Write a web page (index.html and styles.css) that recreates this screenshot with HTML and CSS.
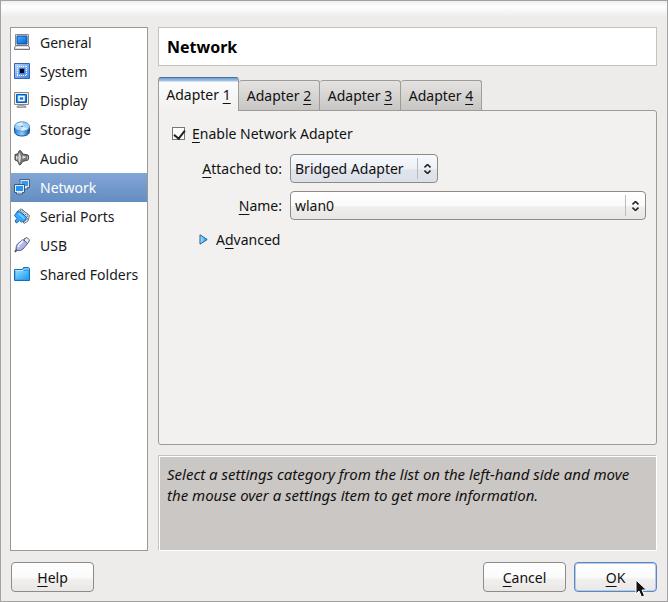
FILE: index.html
```html
<!DOCTYPE html>
<html lang="en">
<head>
<meta charset="utf-8">
<meta name="viewport" content="width=device-width, initial-scale=1">
<title>Settings - Network</title>
<link rel="stylesheet" href="styles.css">
</head>
<body>
<div class="window">
  <div class="titlebar"></div>
  <div class="content">
    <nav class="categories" aria-label="Settings categories">
      <a class="category" href="#general">
        <svg class="icon" viewBox="0 0 16 16"><path d="M1.500.5h13v11h-13z" fill="#eee" stroke="#888"/><path d="M3 2h10v8H3z" fill="url(#blue)" stroke="#0a4fae"/><path d="M2 11.500h12l1.500 2v2H.5v-2z" fill="#ddd" stroke="#777"/><path d="M2 13.500h12" stroke="#fff"/></svg>
        General</a>
      <a class="category" href="#system">
        <svg class="icon" viewBox="0 0 16 16"><path d="M.5.5h15v15H.5z" fill="url(#pale)" stroke="#3565b5"/><path d="M5 3.500h7M5 12.500h7M3.500 5v7M12.500 5v7" stroke="#fff" stroke-dasharray="1 1"/><path d="M3 3h1v1H3zM12 3h1v1h-1zM3 12h1v1H3z" fill="#fff"/><path d="M5 5h6v6H5z" fill="#2d82e0"/><path d="M6 6h4v4H6z" fill="#000"/></svg>
        System</a>
      <a class="category" href="#display">
        <svg class="icon" viewBox="0 0 16 16"><path d="M.5.5h14v12H.5z" fill="#f2f2ea" stroke="#888"/><path d="M2.500 2.500h10v8h-10z" fill="url(#blue)" stroke="#0b59bd"/><path d="M5 4.500h5v4H5z" fill="#1678dc" stroke="#fff" stroke-width="1.500"/><path d="M5 13h5v1h2v1.500H3V14h2z" fill="#bbb" stroke="#888" stroke-width=".7"/></svg>
        Display</a>
      <a class="category" href="#storage">
        <svg class="icon" viewBox="0 0 16 16"><path d="M.5 5.500v5c0 2.800 3.300 4.500 7.500 4.500s7.500-1.700 7.500-4.500v-5z" fill="url(#disk)" stroke="#1c5097"/><ellipse cx="8" cy="5.500" rx="7.500" ry="4.700" fill="#9bd1fc" stroke="#6090c5"/><path d="M8 5.500L2 3.500Q5 1.200 9 1.500zM8 5.500l6 2Q11 10 7 9.700z" fill="#d4efff"/><ellipse cx="8" cy="5.300" rx="1.800" ry="1.100" fill="#247fc6" stroke="#fff" stroke-width=".7"/></svg>
        Storage</a>
      <a class="category" href="#audio">
        <svg class="icon" viewBox="0 0 16 16"><path d="M1 4.500l2.500-.5L5.500.5c1.500 0 2.500 1.500 3 3.500l5.500 1q1.500 2 0 5l-5.500 1.500q-1 3-3 3.500L3.500 11 1 10z" fill="#777" stroke="#484848"/><path d="M2 6h1.500v3.500H2z" fill="#ddd"/><path d="M5 2.500c2.500 2 2.500 8 0 11Q3.500 8 5 2.500z" fill="#d8d8d8"/><path d="M8.500 5.500l4 1.500-4 2z" fill="#ddd"/><path d="M13.500 6v3.500" stroke="#aaa"/></svg>
        Audio</a>
      <a class="category selected" href="#network" aria-current="page">
        <svg class="icon" viewBox="0 0 16 16"><path d="M6 .5h9.500v8h-2v1.500H9V8.500H6z" fill="#dce4ec" stroke="#4a6078"/><path d="M7.500 2H14v5H7.500z" fill="#2e9aff"/><path d="M.5 5.500h10v8h-2V15h-6v-1.500h-2z" fill="#e9eef3" stroke="#345a82"/><path d="M2 7h7v5H2z" fill="#2492fb"/><path d="M3.500 14h4" stroke="#aaa"/></svg>
        Network</a>
      <a class="category" href="#serial">
        <svg class="icon" viewBox="0 0 16 16"><path d="M3 3.500L7 .8l8.500 6.700L14 13l-4 2.500z" fill="#eee" stroke="#777"/><path d="M6 2l8 6.500-1.500 4.500M8 1.500l7 6" fill="none" stroke="#4d718d" stroke-dasharray="2 1"/><path d="M3.500 3.500l3 .5 6 5-1.500 4-3.500 1-2-1.500L2.500 15 1 13l2-2.500-2.500-3z" fill="#39a9ff" stroke="#1769ac"/><path d="M4.500 5.500l6 5" stroke="#87d6ff" stroke-width="1.500"/></svg>
        Serial Ports</a>
      <a class="category" href="#usb">
        <svg class="icon" viewBox="0 0 16 16"><path d="M1 15l2-3" stroke="#555" stroke-width="2"/><path d="M10 2l3-1.500L15.500 3l-1.500 3-2 2z" fill="#eee" stroke="#555d6c"/><path d="M9 2.500l4.500 4L9 12q-2 2-5.500 1.500L2 12q0-3 1.500-5z" fill="#b2b5e6" stroke="#565b9c"/><path d="M4 10q1-3 5-6" fill="none" stroke="#f3f3ff" stroke-width="1.800"/></svg>
        USB</a>
      <a class="category" href="#shared">
        <svg class="icon" viewBox="0 0 16 16"><path d="M.5 3.500h8l1-2h5l1 1v12H.5z" fill="#309bee" stroke="#146ebc"/><path d="M1.500 5h13v8.500h-13z" fill="url(#folder)"/><path d="M1 4.500h8l1-1.500h5" fill="none" stroke="#b9e6ff"/></svg>
        Shared Folders</a>
    </nav>

    <main class="page">
      <h1 class="heading">Network</h1>

      <section class="adapters">
        <div class="tabs" role="tablist" aria-label="Network adapters">
          <button class="tab active" type="button" role="tab" aria-selected="true">Adapter <u>1</u></button>
          <button class="tab" type="button" role="tab" aria-selected="false">Adapter <u>2</u></button>
          <button class="tab" type="button" role="tab" aria-selected="false">Adapter <u>3</u></button>
          <button class="tab" type="button" role="tab" aria-selected="false">Adapter <u>4</u></button>
        </div>
        <div class="panel" role="tabpanel">
          <div class="enable">
            <input class="checkbox" type="checkbox" id="enable" checked>
            <label for="enable"><u>E</u>nable Network Adapter</label>
          </div>
          <div class="fields">
            <label for="attached"><u>A</u>ttached to:</label>
            <div class="combo cool">
              <select id="attached"><option>Bridged Adapter</option><option>NAT</option></select>
              <svg class="arrows" viewBox="0 0 7 10"><path d="M.5 3.500l3-3 3 3M.5 6.500l3 3 3-3"/></svg>
            </div>
            <label for="name"><u>N</u>ame:</label>
            <div class="combo wide">
              <select id="name"><option>wlan0</option><option>eth0</option></select>
              <svg class="arrows" viewBox="0 0 7 10"><path d="M.5 3.500l3-3 3 3M.5 6.500l3 3 3-3"/></svg>
            </div>
          </div>
          <button class="advanced" type="button" aria-expanded="false">
            <svg class="triangle" viewBox="0 0 9 11"><path d="M1 .8L8.200 5.500 1 10.200z" fill="url(#arrow)" stroke="#1c5f99"/></svg>
            <span>A<u>d</u>vanced</span>
          </button>
        </div>
      </section>

      <p class="hint">Select a settings category from the list on the left-hand side and move the mouse over a settings item to get more information.</p>
    </main>
  </div>

  <footer class="actions">
    <button class="button help" type="button"><u>H</u>elp</button>
    <button class="button" type="button"><u>C</u>ancel</button>
    <button class="button default" type="button"><u>O</u>K
      <svg class="pointer" viewBox="0 0 12 19"><path d="M1 1v14l3-3 2.500 6 3-1.200L7 11h4.500z" fill="#111" stroke="#fff"/></svg>
    </button>
  </footer>
</div>

<svg class="defs" aria-hidden="true">
  <defs>
    <linearGradient id="blue" x2="1" y2="1"><stop stop-color="#45b2fb"/><stop offset="1" stop-color="#075ecb"/></linearGradient>
    <linearGradient id="pale" x2="1" y2="1"><stop stop-color="#b9d9ff"/><stop offset="1" stop-color="#3d80e2"/></linearGradient>
    <linearGradient id="disk"><stop stop-color="#2879d2"/><stop offset=".5" stop-color="#8ed0ff"/><stop offset="1" stop-color="#0d4c9c"/></linearGradient>
    <linearGradient id="folder" x2="1" y2="1"><stop stop-color="#91d9ff"/><stop offset="1" stop-color="#159cf2"/></linearGradient>
    <linearGradient id="arrow" x2="1" y2="0"><stop stop-color="#b5e3ff"/><stop offset="1" stop-color="#1695ee"/></linearGradient>
  </defs>
</svg>
</body>
</html>
```

FILE: styles.css
```css
* {
  box-sizing: border-box;
}

body {
  margin: 0;
  font: 14px/21px "Noto Sans", "Open Sans", sans-serif;
  color: #111;
}

button,
select {
  font: inherit;
  color: inherit;
  margin: 0;
}

u {
  text-decoration-thickness: 1px;
  text-underline-offset: 3px;
  text-decoration-skip-ink: none;
}

.defs {
  position: absolute;
  width: 0;
  height: 0;
}

.window {
  display: flex;
  flex-direction: column;
  min-height: 100vh;
  background: #edeceb;
  border: 1px solid #a2a2a2;
}

.titlebar {
  height: 16px;
  margin-bottom: 10px;
  background: linear-gradient(#eee, #fff 35%, #edeceb);
}

.content {
  flex: 1;
  display: grid;
  grid-template-columns: 138px 1fr;
  gap: 10px;
  padding: 0 10px 0 9px;
}

.categories {
  background: #fff;
  border: 1px solid #9c9995;
}

.category {
  display: flex;
  align-items: center;
  gap: 10px;
  height: 29px;
  padding-left: 3px;
  color: #1a1a1a;
  text-decoration: none;
  white-space: nowrap;
}

.category.selected {
  color: #fff;
  background: linear-gradient(#82a6d6, #648dc1);
}

.icon {
  flex: none;
  width: 16px;
  height: 16px;
  margin-bottom: 1px;
}

.page {
  display: flex;
  flex-direction: column;
  min-width: 0;
}

.heading {
  margin: 0 0 11px;
  padding: 8px 8px 6px;
  font-size: 16px;
  line-height: 23px;
  font-weight: 700;
  color: #000;
  background: #fff;
  border: 1px solid #c5c2c0;
}

.adapters {
  flex: 1;
  display: flex;
  flex-direction: column;
}

.tabs {
  display: flex;
  align-items: flex-end;
}

.tab {
  width: 81px;
  height: 30px;
  padding: 0;
  background: linear-gradient(#e4e3e2, #c8c6c4);
  border: 1px solid #9e9b98;
  border-left-width: 0;
  border-bottom-width: 0;
  border-radius: 3px 3px 0 0;
}

.tab.active {
  z-index: 1;
  height: 34px;
  margin-bottom: -1px;
  background: linear-gradient(#719fd2, #a9c7e9 3px, #fcfcfc 4px, #f2f1f0);
  border-left-width: 1px;
  border-top-color: #46709f;
}

.panel {
  flex: 1;
  padding: 12px 10px 12px 13px;
  background: #f2f1f0;
  border: 1px solid #9e9b98;
  border-radius: 0 3px 3px 3px;
}

.enable {
  display: flex;
  align-items: center;
  gap: 7px;
  margin-bottom: 10px;
}

.checkbox {
  appearance: none;
  width: 13px;
  height: 13px;
  margin: 0;
  background: #fff;
  border: 1px solid #777;
}

.checkbox:checked::before {
  content: "";
  display: block;
  width: 5px;
  height: 9px;
  margin: 0 0 0 3px;
  border: solid #222;
  border-width: 0 2px 2px 0;
  transform: rotate(38deg);
}

.fields {
  display: grid;
  grid-template-columns: 110px 1fr;
  align-items: center;
  gap: 8px;
}

.fields label {
  text-align: right;
}

.combo {
  position: relative;
  width: 148px;
}

.combo.wide {
  width: 100%;
}

.combo select {
  appearance: none;
  display: block;
  width: 100%;
  height: 29px;
  padding: 0 30px 0 4px;
  background: linear-gradient(#fff, #fafafa 50%, #efeeed 55%, #e8e7e6);
  border: 1px solid #8e8b87;
  border-radius: 4px;
}

.combo.cool select {
  background: linear-gradient(#f6f9fd, #edf1f6 50%, #e0e4eb 55%, #dce1e8);
}

.combo::after {
  content: "";
  position: absolute;
  top: 4px;
  right: 20px;
  bottom: 4px;
  border-left: 1px solid #bbb;
  pointer-events: none;
}

.arrows {
  position: absolute;
  top: 10px;
  right: 7px;
  width: 7px;
  height: 10px;
  fill: none;
  stroke: #222;
  stroke-width: 1.6;
  pointer-events: none;
}

.advanced {
  display: flex;
  align-items: center;
  gap: 8px;
  margin: 9px 0 0 27px;
  padding: 0;
  background: none;
  border: 0;
}

.triangle {
  width: 9px;
  height: 11px;
}

.hint {
  height: 96px;
  margin: 10px 0 0;
  padding: 8px;
  font-size: 15px;
  font-style: italic;
  background: #cbc7c4;
  border: 1px solid;
  border-color: #c5c2c0 #fff #fff #c5c2c0;
  box-shadow: inset 1px 1px #fff;
}

.actions {
  display: flex;
  gap: 8px;
  padding: 11px 10px 9px;
}

.button {
  position: relative;
  width: 83px;
  height: 30px;
  padding: 0;
  background: linear-gradient(#fff, #fbfbfb 50%, #f0efee 60%, #e9e8e7);
  border: 1px solid #8e8b87;
  border-radius: 4px;
}

.button.help {
  margin-right: auto;
}

.button.default {
  border-color: #5d87bd;
  box-shadow: inset 0 0 0 1px #b4cbe8;
}

.pointer {
  position: absolute;
  top: 16px;
  right: 9px;
  width: 12px;
  height: 19px;
}
```
